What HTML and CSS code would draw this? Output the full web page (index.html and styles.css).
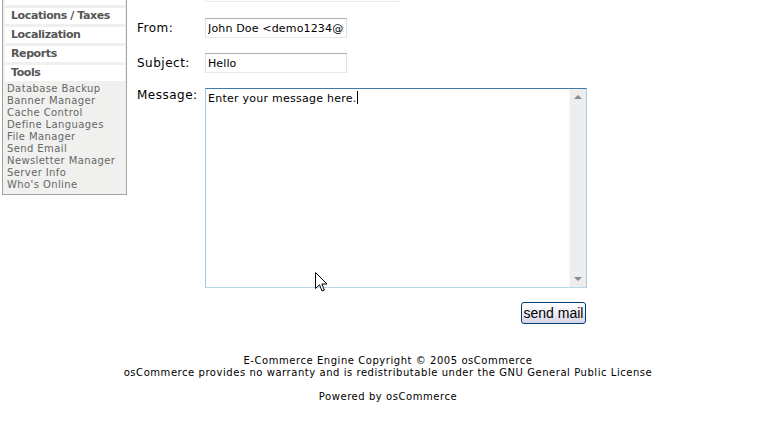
FILE: index.html
```html
<!DOCTYPE html>
<html lang="en">
<head>
    <meta charset="UTF-8">
    <title>osCommerce — Send Email</title>
    <link rel="stylesheet" href="styles.css">
</head>
<body>
    <div class="layout">
        <aside class="sidebar">
            <div class="menu-head menu-cut"></div>
            <div class="menu-head">Locations / Taxes</div>
            <div class="menu-head">Localization</div>
            <div class="menu-head">Reports</div>
            <div class="menu-head">Tools</div>
            <ul class="menu-items">
                <li>Database Backup</li>
                <li>Banner Manager</li>
                <li>Cache Control</li>
                <li>Define Languages</li>
                <li>File Manager</li>
                <li>Send Email</li>
                <li>Newsletter Manager</li>
                <li>Server Info</li>
                <li>Who's Online</li>
            </ul>
        </aside>

        <main class="content">
            <div class="field-cut"></div>
            <form class="mail-form">
                <div class="row">
                    <label class="label">From:</label>
                    <input class="field field-from" type="text" value="John Doe &lt;demo1234@shop.com&gt;">
                </div>
                <div class="row">
                    <label class="label">Subject:</label>
                    <input class="field" type="text" value="Hello">
                </div>
                <div class="row row-top">
                    <label class="label">Message:</label>
                    <div class="message-box">
                        <div class="message-text">Enter your message here.<span class="caret"></span></div>
                        <div class="scrollbar">
                            <span class="arrow arrow-up"></span>
                            <span class="arrow arrow-down"></span>
                        </div>
                    </div>
                </div>
                <div class="actions">
                    <button type="button" class="send-btn">send mail</button>
                </div>
            </form>
        </main>
    </div>

    <footer>
        E-Commerce Engine Copyright &copy; 2005 osCommerce<br>
        osCommerce provides no warranty and is redistributable under the GNU General Public License<br>
        <br>
        Powered by osCommerce
    </footer>

    <!-- mouse pointer -->
    <svg class="pointer" width="13" height="21" viewBox="0 0 13 21">
        <path d="M0.5 0.5 L0.5 16.5 L4.5 12.8 L7 19 L9.3 18 L6.9 12 L12 12 Z" fill="#fff" stroke="#000" stroke-width="1" stroke-linejoin="miter"/>
    </svg>
</body>
</html>
```

FILE: styles.css
```css
body {
    margin: 0;
    font-family: "DejaVu Sans", Verdana, sans-serif;
    color: #000;
    background: #fff;
    position: relative;
    min-height: 422px;
}

.layout {
    display: flex;
    align-items: flex-start;
    padding-left: 2px;
}

/* Left menu */
.sidebar {
    width: 120px;
    padding: 0 1px 3px 2px;
    background-color: #f0f1ef;
    border: 1px solid #a3a3a3;
    border-top: none;
}

.menu-head {
    height: 16px;
    line-height: 16px;
    margin-bottom: 3px;
    padding-left: 6px;
    background-color: #fff;
    font-size: 11px;
    font-weight: bold;
    letter-spacing: -0.4px;
    color: #555;
    white-space: nowrap;
}

.menu-cut {
    height: 5px;
}

.menu-items {
    list-style: none;
    margin: -1px 0 0;
    padding: 0 0 0 2px;
}

.menu-items li {
    font-size: 10px;
    line-height: 12px;
    letter-spacing: 0.4px;
    color: #666;
    white-space: nowrap;
}

/* Mail form */
.content {
    padding-left: 10px;
}

.field-cut {
    width: 192px;
    height: 1px;
    margin-left: 68px;
    border: 1px solid #e3e9ef;
    border-top: none;
}

.mail-form {
    display: flex;
    flex-direction: column;
    gap: 15px;
    margin-top: 16px;
}

.row {
    display: flex;
    align-items: center;
}

.row-top {
    align-items: flex-start;
}

.label {
    width: 68px;
    font-size: 12px;
    line-height: 14px;
    letter-spacing: 0.5px;
}

.field {
    box-sizing: border-box;
    width: 142px;
    height: 20px;
    margin: 0;
    padding: 0 2px;
    border: 1px solid #e3e9ef;
    border-top-color: #abadb3;
    border-left-color: #dbdfe6;
    border-right-color: #dbdfe6;
    font-family: "DejaVu Sans", Verdana, sans-serif;
    font-size: 11px;
    letter-spacing: 0.1px;
    color: #000;
    outline: none;
}

.field-from {
    letter-spacing: 0.16px;
}

.message-box {
    box-sizing: border-box;
    display: flex;
    width: 382px;
    height: 200px;
    border: 1px solid #a4c9e3;
    border-top-color: #3d7bad;
    border-bottom-color: #b7d9ed;
}

.message-text {
    flex: 1;
    padding: 2px 2px;
    font-size: 11px;
    line-height: 14px;
    letter-spacing: 0.25px;
}

.caret {
    display: inline-block;
    width: 1px;
    height: 13px;
    margin-left: 1px;
    vertical-align: -2px;
    background-color: #000;
}

.scrollbar {
    width: 16px;
    background-color: #ededed;
    border-left: 1px solid #f6f6f6;
    display: flex;
    flex-direction: column;
    justify-content: space-between;
    align-items: center;
    padding: 6px 0;
}

.arrow {
    width: 0;
    height: 0;
    border-left: 4px solid transparent;
    border-right: 4px solid transparent;
}

.arrow-up {
    border-bottom: 4px solid #8a8a8a;
}

.arrow-down {
    border-top: 4px solid #8a8a8a;
}

.actions {
    display: flex;
    justify-content: flex-end;
    width: 449px;
    margin-top: -1px;
}

.send-btn {
    box-sizing: border-box;
    width: 65px;
    height: 22px;
    padding: 0;
    border: 1px solid #003c74;
    border-radius: 3px;
    background: linear-gradient(to bottom, #ffffff 0%, #f2f1f7 45%, #d6d3e6 100%);
    font-family: "Liberation Sans", Arial, sans-serif;
    font-size: 14px;
    color: #000;
}

footer {
    margin-top: 31px;
    text-align: center;
    font-size: 10px;
    line-height: 12px;
    letter-spacing: 0.55px;
}

.pointer {
    position: absolute;
    left: 315px;
    top: 272px;
}
```
